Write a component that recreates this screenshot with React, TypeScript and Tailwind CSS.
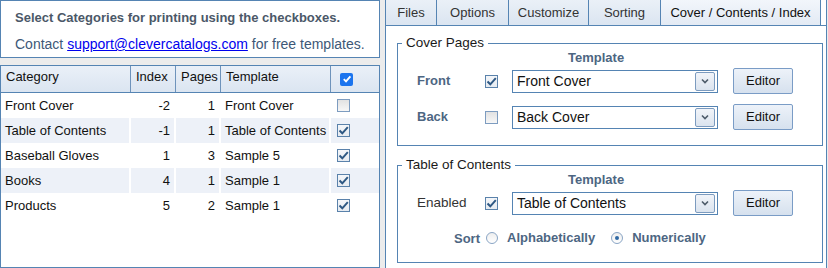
import React from 'react'

const rows = [
  { name: 'Front Cover', index: -2, pages: 1, template: 'Front Cover', checked: false },
  { name: 'Table of Contents', index: -1, pages: 1, template: 'Table of Contents', checked: true },
  { name: 'Baseball Gloves', index: 1, pages: 3, template: 'Sample 5', checked: true },
  { name: 'Books', index: 4, pages: 1, template: 'Sample 1', checked: true },
  { name: 'Products', index: 5, pages: 2, template: 'Sample 1', checked: true },
]

const tabs = [
  { label: 'Files', w: 'w-[51px]' },
  { label: 'Options', w: 'w-[72px]' },
  { label: 'Customize', w: 'w-[80px]' },
  { label: 'Sorting', w: 'w-[72px]' },
  { label: 'Cover / Contents / Index', w: 'w-[160px]', active: true },
]

function Check({ checked }: { checked: boolean }) {
  return (
    <span
      className={`flex h-[13px] w-[13px] shrink-0 items-center justify-center border ${
        checked ? 'border-[#5a82ab] bg-gradient-to-b from-[#f4f6f9] to-[#e6ebf1]' : 'border-[#7d9cc0] bg-gradient-to-b from-[#e2e2e2] to-[#f7f7f7]'
      }`}
    >
      {checked && (
        <svg width="11" height="11" viewBox="0 0 11 11">
          <path d="M1.5 5.5 L4.3 8.3 L9.8 2.2" fill="none" stroke="#2e5883" strokeWidth="2" />
        </svg>
      )}
    </span>
  )
}

function Radio({ on }: { on: boolean }) {
  return (
    <span className="flex h-[12px] w-[12px] shrink-0 items-center justify-center rounded-full border border-[#8aa5c5] bg-gradient-to-b from-[#eeeeee] to-[#ffffff]">
      {on && <span className="h-[4px] w-[4px] rounded-full bg-[#2f68a3]" />}
    </span>
  )
}

function Select({ value }: { value: string }) {
  return (
    <div className="flex h-[23px] w-[206px] items-center justify-between border border-[#5584b3] bg-white pl-[4px] pr-[2px] text-[14px] text-[#111]">
      <span>{value}</span>
      <span className="flex h-[19px] w-[20px] items-center justify-center rounded-[2px] border border-[#7c9bbf] bg-gradient-to-b from-[#f1f4f9] to-[#dbe4ef]">
        <svg width="8" height="6" viewBox="0 0 8 6">
          <path d="M1 1.5 L4 4.5 L7 1.5" fill="none" stroke="#4d5b6a" strokeWidth="1.6" />
        </svg>
      </span>
    </div>
  )
}

function EditorButton() {
  return (
    <button className="ml-[15px] flex h-[26px] w-[60px] items-center justify-center rounded-[2px] border border-[#7a9cc6] bg-gradient-to-b from-[#edf2f9] to-[#d6e1ee] text-[13px] text-[#111]">
      Editor
    </button>
  )
}

export default function App() {
  return (
    <div
      className="flex h-[268px] w-[828px] overflow-hidden bg-[#ececec] text-[#111]"
      style={{ fontFamily: '"Liberation Sans", Arial, sans-serif' }}
    >
      {/* left column */}
      <div className="flex w-[380px] shrink-0 flex-col">
        <div className="flex h-[58px] flex-col border border-[#5584b3] bg-white pl-[14px]">
          <div className="mt-[9px] text-[13px] leading-[16px] font-bold text-[#4b5868]">
            Select Categories for printing using the checkboxes.
          </div>
          <div className="mt-[10px] text-[14px] leading-[16px] text-[#3d5877]">
            Contact <span className="text-[#0000ee] underline">support@clevercatalogs.com</span> for free templates.
          </div>
        </div>

        <div className="mt-[7px] flex-1 border border-[#5584b3] bg-white text-[13px]">
          <div className="flex h-[27px] border-b border-[#5584b3] bg-gradient-to-b from-[#eaf0f8] to-[#dbe5f1] leading-[21px]">
            <div className="w-[130px] border-r border-[#6e93bb] pl-[5px]">Category</div>
            <div className="w-[45px] border-r border-[#6e93bb] pl-[5px]">Index</div>
            <div className="w-[45px] border-r border-[#6e93bb] pl-[5px]">Pages</div>
            <div className="w-[110px] border-r border-[#6e93bb] pl-[5px]">Template</div>
            <div className="flex flex-1 items-center pl-[9px]">
              <span className="flex h-[13px] w-[13px] items-center justify-center rounded-[2px] bg-[#1b74ee]">
                <svg width="10" height="10" viewBox="0 0 10 10">
                  <path d="M1.8 5.2 L4 7.4 L8.4 2.4" fill="none" stroke="white" strokeWidth="1.9" />
                </svg>
              </span>
            </div>
          </div>
          {rows.map((r, i) => (
            <div key={r.name} className={`flex h-[25px] items-center ${i % 2 === 1 ? 'bg-[#edf1f8]' : 'bg-white'}`}>
              <div className="h-full w-[130px] border-r-2 border-white pl-[4px] leading-[25px]">{r.name}</div>
              <div className="h-full w-[45px] border-r-2 border-white pr-[4px] text-right leading-[25px]">{r.index}</div>
              <div className="h-full w-[45px] border-r-2 border-white pr-[4px] text-right leading-[25px]">{r.pages}</div>
              <div className="h-full w-[110px] border-r-2 border-white pl-[4px] leading-[25px] whitespace-nowrap">{r.template}</div>
              <div className="flex flex-1 items-center pl-[6px]">
                <Check checked={r.checked} />
              </div>
            </div>
          ))}
        </div>
      </div>

      {/* right panel */}
      <div className="ml-[5px] flex w-[442px] shrink-0 flex-col border-x border-[#5584b3] bg-white">
        <div className="flex h-[26px] border-b border-[#5584b3] bg-white">
          {tabs.map((t) => (
            <div
              key={t.label}
              className={`${t.w} flex items-center justify-center border-r border-[#5584b3] text-[13px] ${
                t.active ? 'bg-gradient-to-b from-[#f2f6fb] to-[#e3eaf4] text-[#111]' : 'bg-gradient-to-b from-[#eaf0f7] to-[#dbe5f1] text-[#333]'
              }`}
            >
              {t.label}
            </div>
          ))}
        </div>

        <fieldset className="mt-[9px] ml-[11px] mr-[3px] border border-[#5584b3] pb-[15px]">
          <legend className="ml-[4px] px-[4px] text-[13.5px] leading-[16px] text-[#1a1a1a]">Cover Pages</legend>
          <div className="pl-[170px] text-[13px] leading-[14px] font-bold text-[#4d6682]">Template</div>
          <div className="mt-[3px] flex h-[26px] items-center pl-[19px]">
            <span className="w-[68px] text-[13px] font-bold text-[#4d6682]">Front</span>
            <Check checked={true} />
            <div className="ml-[14px]">
              <Select value="Front Cover" />
            </div>
            <EditorButton />
          </div>
          <div className="mt-[10px] flex h-[26px] items-center pl-[19px]">
            <span className="w-[68px] text-[13px] font-bold text-[#4d6682]">Back</span>
            <Check checked={false} />
            <div className="ml-[14px]">
              <Select value="Back Cover" />
            </div>
            <EditorButton />
          </div>
        </fieldset>

        <fieldset className="mt-[11px] ml-[11px] mr-[3px] border border-[#5584b3] pb-[16px]">
          <legend className="ml-[4px] px-[4px] text-[13.5px] leading-[16px] text-[#1a1a1a]">Table of Contents</legend>
          <div className="pl-[170px] text-[13px] leading-[14px] font-bold text-[#4d6682]">Template</div>
          <div className="mt-[3px] flex h-[26px] items-center pl-[19px]">
            <span className="w-[68px] text-[13.5px] text-[#333]">Enabled</span>
            <Check checked={true} />
            <div className="ml-[14px]">
              <Select value="Table of Contents" />
            </div>
            <EditorButton />
          </div>
          <div className="mt-[14px] flex h-[16px] items-center pl-[56px] text-[13px] font-bold text-[#4d6682]">
            <span className="mt-[2px]">Sort</span>
            <span className="ml-[6px]">
              <Radio on={false} />
            </span>
            <span className="ml-[9px]">Alphabetically</span>
            <span className="ml-[16px]">
              <Radio on={true} />
            </span>
            <span className="ml-[9px]">Numerically</span>
          </div>
        </fieldset>
      </div>
    </div>
  )
}
